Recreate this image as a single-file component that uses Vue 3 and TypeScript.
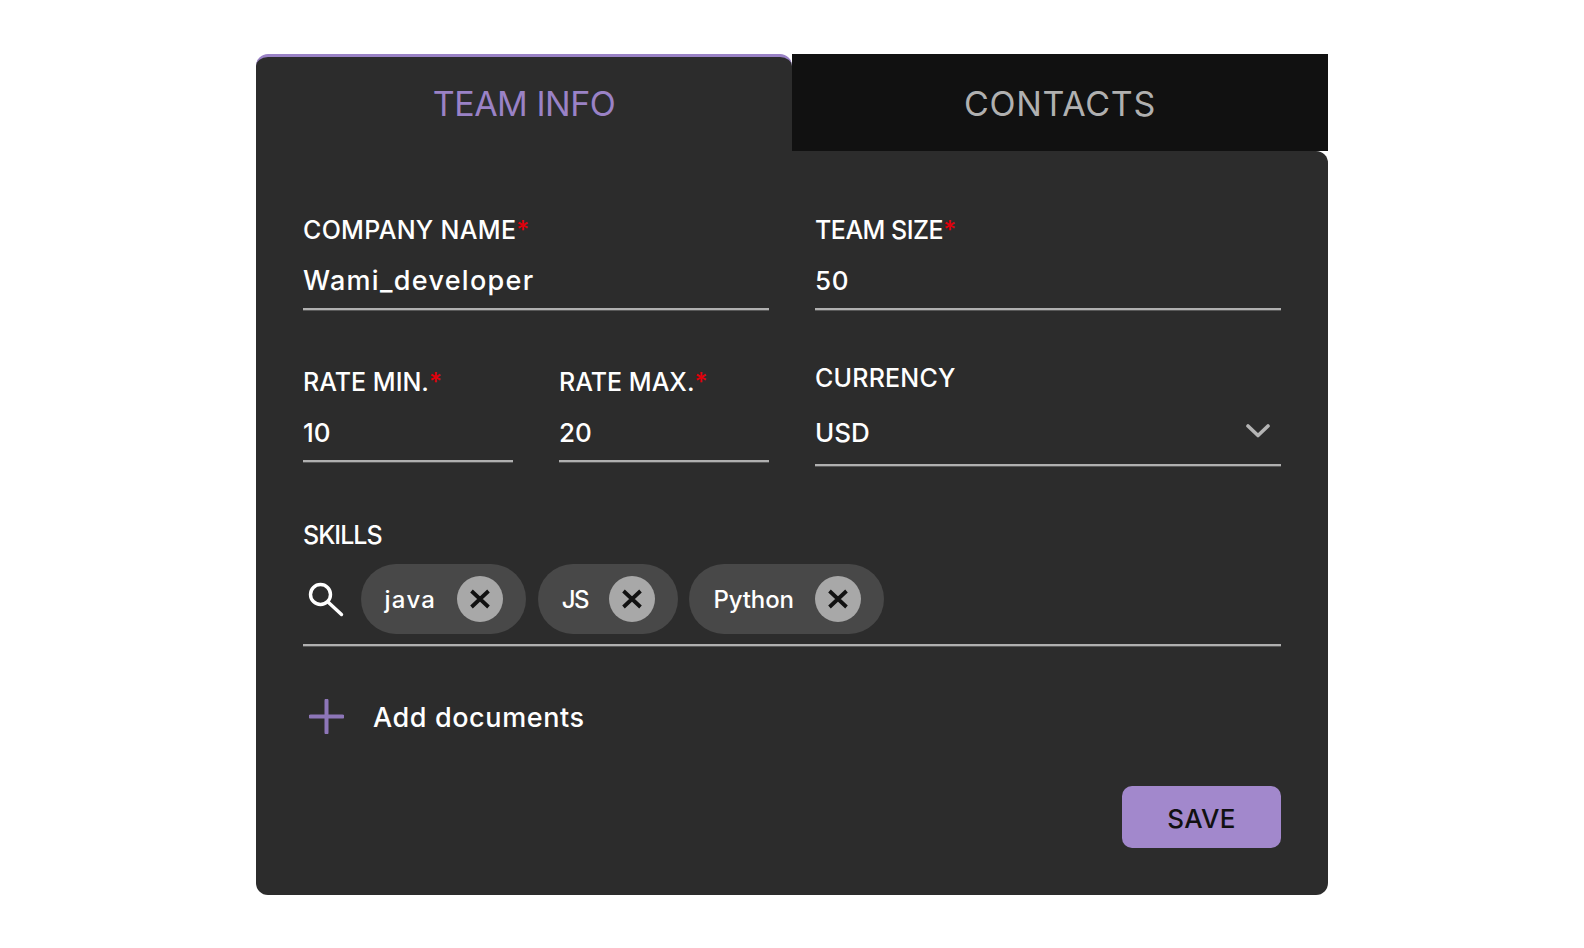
<script setup lang="ts">
import { ref } from "vue";

// tracking keeps each chip as wide as in the design
const skills = ref([
  { name: "java", tracking: 1.3 },
  { name: "JS", tracking: -1.6 },
  { name: "Python", tracking: -0.1 }
]);
const activeTab = ref("team");
</script>

<template>
  <div class="page">
    <div class="card">
      <div class="tabs">
        <div class="tab tabTeam" :class="{ tabActive: activeTab === 'team' }">TEAM INFO</div>
        <div class="tab tabContacts" :class="{ tabActive: activeTab === 'contacts' }">CONTACTS</div>
      </div>

      <div class="panel">
        <div class="row">
          <div class="field">
            <div class="label labelCompany">COMPANY NAME<span class="req">*</span></div>
            <div class="value valueCompany">Wami_developer</div>
          </div>
          <div class="field">
            <div class="label labelSize">TEAM SIZE<span class="req">*</span></div>
            <div class="value valueSize">50</div>
          </div>
        </div>

        <div class="row rowRates">
          <div class="rates">
            <div class="field">
              <div class="label labelRate">RATE MIN.<span class="req">*</span></div>
              <div class="value">10</div>
            </div>
            <div class="field">
              <div class="label labelRate">RATE MAX.<span class="req">*</span></div>
              <div class="value">20</div>
            </div>
          </div>
          <div class="field fieldSelect">
            <div class="label labelCurrency">CURRENCY</div>
            <div class="value valueSelect">
              <span>USD</span>
              <svg class="chevron" viewBox="0 0 24 14" aria-hidden="true">
                <path d="M2 2 L12 11.5 L22 2" fill="none" stroke="#b4b4b4" stroke-width="3.6" stroke-linecap="round" stroke-linejoin="round" />
              </svg>
            </div>
          </div>
        </div>

        <div class="skills">
          <div class="label labelSkills">SKILLS</div>
          <div class="skillRow">
            <svg class="searchIcon" viewBox="0 0 36 36" aria-hidden="true">
              <circle cx="12.5" cy="13.5" r="10" fill="none" stroke="#fff" stroke-width="3.4" />
              <path d="M20 21 L33.5 33.5" fill="none" stroke="#fff" stroke-width="3.4" stroke-linecap="round" />
            </svg>
            <div v-for="skill in skills" :key="skill.name" class="chip">
              <span class="chipText" :style="{ letterSpacing: `${skill.tracking}px` }">{{ skill.name }}</span>
              <span class="chipClose">
                <svg viewBox="0 0 20 20" aria-hidden="true">
                  <path d="M1.5 2 L18.5 18 M18.5 2 L1.5 18" fill="none" stroke="#111" stroke-width="3.8" />
                </svg>
              </span>
            </div>
          </div>
        </div>

        <div class="addRow">
          <svg class="plusIcon" viewBox="0 0 35 35" aria-hidden="true">
            <path d="M17.5 1.5 V33.5 M1.5 17.5 H33.5" fill="none" stroke="#8d76b8" stroke-width="4" stroke-linecap="round" />
          </svg>
          <span class="addText">Add documents</span>
        </div>

        <div class="actions">
          <button class="saveBtn" type="button">SAVE</button>
        </div>
      </div>
    </div>
  </div>
</template>

<style>
html,
body {
  margin: 0;
  background: #fff;
}
</style>

<style scoped>
.page {
  min-height: 100vh;
  display: flex;
  align-items: center;
  justify-content: center;
  font-family: "Inter", "Liberation Sans", sans-serif;
  color: #fff;
}

.card {
  width: 1072px;
}

.tabs {
  display: flex;
  height: 97px;
}

.tab {
  flex: 1;
  display: flex;
  align-items: center;
  justify-content: center;
  box-sizing: border-box;
  padding-top: 2px;
  background: #111;
  color: #b0b0b0;
  font-size: 34px;
}

.tabTeam {
  letter-spacing: -0.5px;
}

.tabContacts {
  letter-spacing: 0.7px;
}

.tabActive {
  padding-top: 0;
  padding-bottom: 1px;
  border-top: 3px solid #9a82c6;
  border-radius: 12px 12px 0 0;
  background: #2c2c2c;
  color: #9a82c6;
}

.panel {
  display: flex;
  flex-direction: column;
  padding: 61px 47px 47px;
  border-radius: 0 12px 12px 12px;
  background: #2c2c2c;
}

.row {
  display: grid;
  grid-template-columns: 1fr 1fr;
  gap: 46px;
  align-items: start;
}

.rowRates {
  margin-top: 54px;
}

.rates {
  display: grid;
  grid-template-columns: 1fr 1fr;
  gap: 46px;
}

.field {
  display: flex;
  flex-direction: column;
  gap: 15px;
}

.fieldSelect {
  margin-top: -4px;
  gap: 19px;
}

.label {
  font-size: 25px;
  font-weight: 450;
  line-height: 36px;
}

.labelCompany {
  letter-spacing: 0.3px;
}

.labelSize {
  letter-spacing: -0.5px;
}

.labelRate {
  letter-spacing: 0;
}

.labelCurrency {
  letter-spacing: 0.2px;
}

.labelSkills {
  letter-spacing: -1px;
}

.req {
  color: #e0000b;
}

.value {
  padding-bottom: 9px;
  border-bottom: 2px solid #b0b0b0;
  box-shadow: 0 1px 0 rgba(176, 176, 176, 0.35);
  font-size: 26px;
  font-weight: 450;
  line-height: 36px;
}

.valueCompany {
  font-size: 27px;
  letter-spacing: 1.3px;
}

.valueSize {
  letter-spacing: 0.6px;
}

.valueSelect {
  display: flex;
  align-items: center;
  justify-content: space-between;
  padding-right: 11px;
  padding-bottom: 13px;
}

.chevron {
  width: 24px;
  height: 14px;
  margin-top: -3px;
}

.skills {
  margin-top: 51px;
}

.skillRow {
  display: flex;
  align-items: center;
  gap: 11.5px;
  margin-top: 11px;
  padding-bottom: 10px;
  border-bottom: 2px solid #b0b0b0;
  box-shadow: 0 1px 0 rgba(176, 176, 176, 0.35);
}

.searchIcon {
  width: 36px;
  height: 36px;
  margin: 0 5px 0 5px;
}

.chip {
  display: flex;
  align-items: center;
  gap: 21px;
  height: 70px;
  padding: 0 23px 0 24px;
  border-radius: 35px;
  background: #484848;
}

.chipText {
  padding-top: 2px;
  font-size: 24px;
  font-weight: 450;
}

.chipClose {
  width: 46px;
  height: 46px;
  display: grid;
  place-items: center;
  border-radius: 50%;
  background: #a8a8a8;
}

.chipClose svg {
  width: 20px;
  height: 20px;
}

.addRow {
  display: flex;
  align-items: center;
  gap: 29px;
  height: 36px;
  margin-top: 53px;
  padding-left: 6px;
}

.plusIcon {
  width: 35px;
  height: 35px;
}

.addText {
  padding-top: 2px;
  font-size: 27px;
  font-weight: 450;
  letter-spacing: 0.6px;
}

.actions {
  display: flex;
  justify-content: flex-end;
  margin-top: 51px;
}

.saveBtn {
  width: 159px;
  height: 62px;
  padding-top: 4px;
  border: none;
  border-radius: 10px;
  background: #a288cc;
  color: #111;
  font-family: inherit;
  font-size: 26px;
  font-weight: 500;
  letter-spacing: 0.3px;
}
</style>
